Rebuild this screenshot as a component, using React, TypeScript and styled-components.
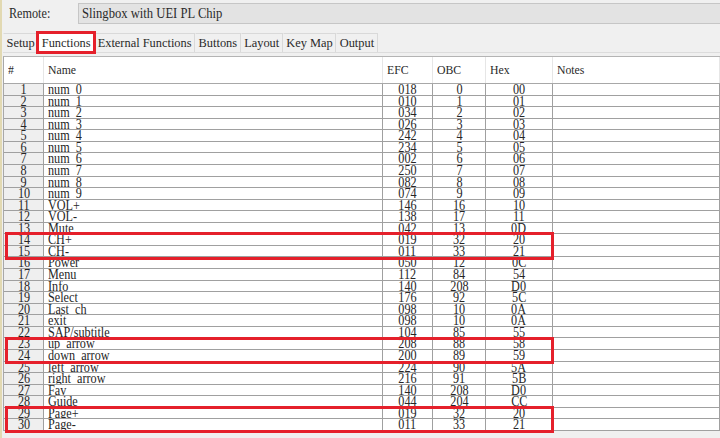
import styled, { createGlobalStyle } from "styled-components";

const ROW_H = 11.57;

const GlobalStyle = createGlobalStyle`
  html, body {
    margin: 0;
    padding: 0;
    background: #f0f0f0;
  }
  body {
    font-family: "Liberation Serif", "Times New Roman", serif;
    color: #1e1e1e;
  }
`;

const Window = styled.div`
  width: 720px;
  height: 438px;
  overflow: hidden;
  background: #f0f0f0;
  border-left: 2px solid #e2d9b2;
  box-sizing: border-box;
  padding-left: 1px;
`;

const TopBar = styled.div`
  display: grid;
  grid-template-columns: 75px 1fr;
  align-items: center;
  height: 28px;
  padding-top: 3px;
  box-sizing: border-box;
`;

const Squeeze = styled.span<{ $origin?: string }>`
  display: inline-block;
  white-space: nowrap;
  transform: scaleX(0.87);
  transform-origin: ${(p) => p.$origin ?? "left"} center;
`;

const RemoteLabel = styled.div`
  font-size: 14px;
  padding-left: 6px;
  align-self: start;
  line-height: 21px;
  color: #2a2a2a;
`;

const RemoteBox = styled.div`
  height: 21px;
  margin-right: -20px;
  background: #e3e3e3;
  border: 1px solid #c6c6c6;
  box-sizing: border-box;
  font-size: 14.5px;
  line-height: 19px;
  padding-left: 3px;
  color: #2a2a2a;
  align-self: start;
`;

const TabStrip = styled.div`
  display: flex;
  align-items: flex-end;
  height: 25px;
  padding-top: 6px;
  box-sizing: border-box;
  border-bottom: 1px solid #dcdcdc;
  margin-bottom: 3px;
`;

const Tab = styled.div<{ $active?: boolean }>`
  height: 19px;
  box-sizing: border-box;
  padding: 0 2.5px;
  font-size: 12.4px;
  line-height: 18px;
  white-space: nowrap;
  color: #2a2a2a;
  background: ${(p) => (p.$active ? "#ffffff" : "#f0f0f0")};
  border: 1px solid #d9d9d9;
  border-bottom: none;
  border-left-color: ${(p) => (p.$active ? "#d9d9d9" : "transparent")};
  outline: ${(p) => (p.$active ? "3px solid #e5202b" : "none")};
  outline-offset: -1px;
  position: relative;
  z-index: ${(p) => (p.$active ? 1 : 0)};
`;

const Table = styled.div`
  border-left: 1px solid #a8a8a8;
  border-top: 1px solid #b4b4b4;
`;

const COLS = "40px 339px 50px 53px 67px 1fr";

const HeaderRow = styled.div`
  display: grid;
  grid-template-columns: ${COLS};
  height: 27px;
  background: #ffffff;
  border-bottom: 1px solid #a8a8a8;
  box-sizing: border-box;
`;

const HeadCell = styled.div`
  display: flex;
  align-items: center;
  padding-left: 4px;
  font-size: 13.5px;
  border-right: 1px solid #e6e6e6;
  color: #2a2a2a;
  overflow: hidden;
`;

const Body = styled.div`
  position: relative;
  display: grid;
  grid-template-columns: ${COLS};
  grid-auto-rows: ${ROW_H}px;
  background: #ffffff;
`;

const Cell = styled.div<{ $align?: "left" | "center"; $shade?: boolean }>`
  box-sizing: border-box;
  overflow: hidden;
  border-right: 1px solid #a0a0a0;
  border-bottom: 1px solid #a0a0a0;
  background: ${(p) => (p.$shade ? "#efefef" : "#ffffff")};
  font-size: 14px;
  line-height: ${ROW_H}px;
  text-align: ${(p) => p.$align ?? "left"};
  padding-left: ${(p) => (p.$align === "center" ? "0" : "4px")};
  color: #262626;
`;

const Highlight = styled.div<{ $row: number }>`
  position: absolute;
  left: 1px;
  width: 549px;
  top: ${(p) => p.$row * ROW_H - 2}px;
  height: ${2 * ROW_H + 4}px;
  border: 3px solid #e5202b;
  box-sizing: border-box;
  pointer-events: none;
`;

const tabs = ["Setup", "Functions", "External Functions", "Buttons", "Layout", "Key Map", "Output"];

const rows: [string, string, string, string][] = [
  ["num_0", "018", "0", "00"],
  ["num_1", "010", "1", "01"],
  ["num_2", "034", "2", "02"],
  ["num_3", "026", "3", "03"],
  ["num_4", "242", "4", "04"],
  ["num_5", "234", "5", "05"],
  ["num_6", "002", "6", "06"],
  ["num_7", "250", "7", "07"],
  ["num_8", "082", "8", "08"],
  ["num_9", "074", "9", "09"],
  ["VOL+", "146", "16", "10"],
  ["VOL-", "138", "17", "11"],
  ["Mute", "042", "13", "0D"],
  ["CH+", "019", "32", "20"],
  ["CH-", "011", "33", "21"],
  ["Power", "050", "12", "0C"],
  ["Menu", "112", "84", "54"],
  ["Info", "140", "208", "D0"],
  ["Select", "176", "92", "5C"],
  ["Last_ch", "098", "10", "0A"],
  ["exit", "098", "10", "0A"],
  ["SAP/subtitle", "104", "85", "55"],
  ["up_arrow", "208", "88", "58"],
  ["down_arrow", "200", "89", "59"],
  ["left_arrow", "224", "90", "5A"],
  ["right_arrow", "216", "91", "5B"],
  ["Fav", "140", "208", "D0"],
  ["Guide", "044", "204", "CC"],
  ["Page+", "019", "32", "20"],
  ["Page-", "011", "33", "21"],
];

// rows (0-based) where a red box around two rows starts
const marked = [13, 22, 28];

function Row({ n, name, efc, obc, hex }: { n: number; name: string; efc: string; obc: string; hex: string }) {
  return (
    <>
      <Cell $align="center" $shade>
        <Squeeze $origin="center">{n}</Squeeze>
      </Cell>
      <Cell>
        <Squeeze>{name}</Squeeze>
      </Cell>
      <Cell $align="center">
        <Squeeze $origin="center">{efc}</Squeeze>
      </Cell>
      <Cell $align="center">
        <Squeeze $origin="center">{obc}</Squeeze>
      </Cell>
      <Cell $align="center">
        <Squeeze $origin="center">{hex}</Squeeze>
      </Cell>
      <Cell />
    </>
  );
}

export default function App() {
  return (
    <>
      <GlobalStyle />
      <Window>
        <TopBar>
          <RemoteLabel>
            <Squeeze>Remote:</Squeeze>
          </RemoteLabel>
          <RemoteBox>
            <Squeeze>Slingbox with UEI PL Chip</Squeeze>
          </RemoteBox>
        </TopBar>

        <TabStrip>
          {tabs.map((t) => (
            <Tab key={t} $active={t === "Functions"}>
              {t}
            </Tab>
          ))}
        </TabStrip>

        <Table>
          <HeaderRow>
            {["#", "Name", "EFC", "OBC", "Hex", "Notes"].map((h) => (
              <HeadCell key={h}>
                <Squeeze>{h}</Squeeze>
              </HeadCell>
            ))}
          </HeaderRow>
          <Body>
            {rows.map(([name, efc, obc, hex], i) => (
              <Row key={i} n={i + 1} name={name} efc={efc} obc={obc} hex={hex} />
            ))}
            {marked.map((r) => (
              <Highlight key={r} $row={r} />
            ))}
          </Body>
        </Table>
      </Window>
    </>
  );
}
